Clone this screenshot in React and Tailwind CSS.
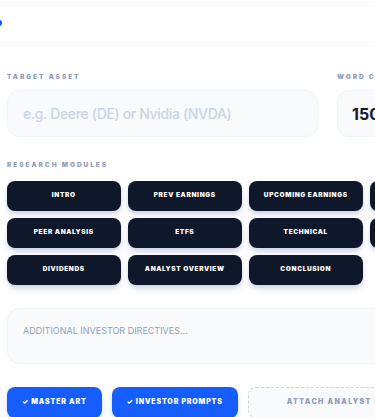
export default function App() {
  const modules = [
    "Intro",
    "Prev Earnings",
    "Upcoming Earnings",
    "Risk Factors",
    "Peer Analysis",
    "ETFs",
    "Technical",
    "Options Flow",
    "Dividends",
    "Analyst Overview",
    "Conclusion",
  ];
  return (
    <div className="h-[417px] w-[375px] overflow-hidden bg-white font-['Inter',sans-serif]">
      <div className="mt-[2px] flex h-[41px] items-center border-y border-gray-100">
        <div className="-ml-[3px] h-[6px] w-[5px] rounded-full bg-blue-600" />
      </div>
      <div className="w-[490px] pl-[7px]">
        <div className="mt-[29px] flex gap-[19px]">
          <div className="w-[311px]">
            <div className="text-[6.5px] font-black uppercase leading-[10px] tracking-[0.3em] text-slate-400">
              Target Asset
            </div>
            <div className="mt-[8px] flex h-[47px] items-center rounded-xl border border-slate-100 bg-slate-50 px-[15px] text-[14px] font-medium tracking-tight text-slate-300">
              e.g. Deere (DE) or Nvidia (NVDA)
            </div>
          </div>
          <div className="w-[140px]">
            <div className="text-[6.5px] font-black uppercase leading-[10px] tracking-[0.3em] text-slate-400">
              Word Count
            </div>
            <div className="mt-[8px] flex h-[47px] items-center rounded-xl border border-slate-100 bg-slate-50 px-[14px] text-[16px] font-bold text-slate-900">
              1500
            </div>
          </div>
        </div>
        <div className="mt-[23px] text-[6.5px] font-black uppercase leading-[10px] tracking-[0.3em] text-slate-400">
          Research Modules
        </div>
        <div className="mt-[11px] grid grid-cols-[repeat(4,113.5px)] gap-x-[7.5px] gap-y-[7px]">
          {modules.map((m) => (
            <div
              key={m}
              className="flex h-[30px] items-center justify-center rounded-lg bg-slate-900 text-[6.5px] font-black uppercase tracking-[0.1em] text-white shadow-md shadow-slate-300"
            >
              {m}
            </div>
          ))}
        </div>
        <div className="mt-[23px] h-[56px] rounded-xl border border-slate-100 bg-slate-50 px-[15px] pt-[15px] text-[9px] uppercase text-slate-400">
          Additional investor directives...
        </div>
        <div className="mt-[23px] flex gap-[10px]">
          <div className="flex h-[31px] items-center rounded-lg bg-blue-600 px-[15px] text-[7px] font-black uppercase tracking-[0.12em] text-white shadow-md shadow-blue-200">
            ✓ Master Art
          </div>
          <div className="flex h-[31px] items-center rounded-lg bg-blue-600 px-[15px] text-[7px] font-black uppercase tracking-[0.12em] text-white shadow-md shadow-blue-200">
            ✓ Investor Prompts
          </div>
          <div className="flex h-[31px] items-center rounded-lg border border-dashed border-slate-300 bg-slate-50 px-[38px] text-[7px] font-black uppercase tracking-[0.2em] text-slate-400">
            Attach Analyst Data
          </div>
        </div>
      </div>
    </div>
  );
}
